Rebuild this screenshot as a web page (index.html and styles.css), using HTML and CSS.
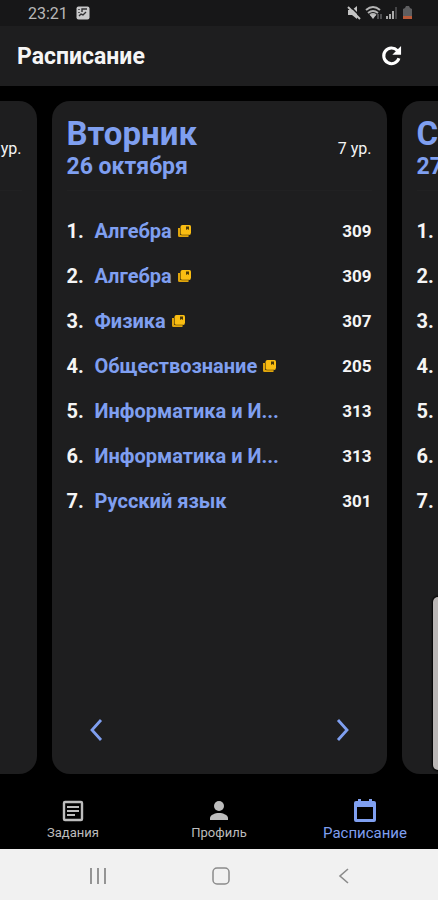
FILE: index.html
```html
<!DOCTYPE html>
<html lang="ru">
<head>
    <meta charset="UTF-8">
    <meta name="viewport" content="width=device-width, initial-scale=1.0">
    <title>Расписание</title>
    <link rel="stylesheet" href="styles.css">
</head>
<body>
    <svg class="sprite" aria-hidden="true">
        <symbol id="homework" viewBox="0 0 14 14">
            <path fill="#e0a50c" d="M0 4h2v7h8.500v2H1.500Q0 13 0 11.500z"/>
            <path fill="#f9bd12" d="M4.500 1h7Q13 1 13 2.500v6Q13 11 11 11h-7Q2.500 11 2.500 9v-6Q2.500 1 4.500 1z"/>
            <path fill="#4a3908" d="M8 2.500h3V6L9.500 5 8 6z"/>
            <path stroke="#8a6706" stroke-width="0.800" fill="none" d="M2.500 4v5.500q0 1.500 1.500 1.500h7"/>
        </symbol>
    </svg>

    <div class="status">
        <span class="time">23:21</span>
        <svg width="14" height="14" viewBox="0 0 14 14">
            <rect x="0.500" y="0.500" width="13" height="13" rx="2" fill="#c9c9ca"/>
            <path d="M3 3v1M3 6v1M6 6V3h5M3 10l2-2 2 1 3-3" stroke="#303032" stroke-width="1.400" fill="none"/>
        </svg>
        <svg class="signals" width="66" height="16" viewBox="0 0 66 16">
            <path d="M1 5h4l5-4v13L5 10H1z" fill="#c4c4c4"/>
            <path d="M3 1l11 11" stroke="#171718" stroke-width="1.500"/>
            <path d="M1 2l12 12" stroke="#c4c4c4" stroke-width="2"/>
            <path d="M19 5q7-6 14 0M21 8q5-4 10 0M23 10q3-2 6 0" fill="none" stroke="#b4b4b4" stroke-width="2"/>
            <path d="M23 10h6l-3 4z" fill="#c4c4c4"/>
            <path d="M31 14V9M34 9v5" stroke="#505052" stroke-width="2"/>
            <path d="M40 14v-3M43 14V9M46 14V6" stroke="#aaa" stroke-width="2"/>
            <path d="M49 14V2" stroke="#444446" stroke-width="2"/>
            <path d="M56 4l2-1 1-2h3l1 2 2 1v7h-9z" fill="#5e5e60"/>
            <path d="M56 11h9v3h-9z" fill="#b95a39"/>
        </svg>
    </div>

    <header class="appbar">
        <h1>Расписание</h1>
        <button class="icon-btn" aria-label="Обновить">
            <svg width="28" height="28" viewBox="0 0 24 24">
                <path d="M18.800 14A6.700 6.700 0 1 1 17.400 7.300" fill="none" stroke="#fff" stroke-width="2.600"/>
                <path d="M20.600 3.500V11h-7.500z" fill="#fff"/>
            </svg>
        </button>
    </header>

    <main class="days">
        <section class="day">
            <div class="day-head">
                <span class="count">ур.</span>
            </div>
        </section>

        <section class="day">
            <div class="day-head">
                <div>
                    <h2>Вторник</h2>
                    <p class="date">26 октября</p>
                </div>
                <span class="count">7 ур.</span>
            </div>
            <ol class="lessons">
                <li><span class="num">1.</span><span class="name">Алгебра</span><svg class="hw"><use href="#homework"/></svg><span class="room">309</span></li>
                <li><span class="num">2.</span><span class="name">Алгебра</span><svg class="hw"><use href="#homework"/></svg><span class="room">309</span></li>
                <li><span class="num">3.</span><span class="name">Физика</span><svg class="hw"><use href="#homework"/></svg><span class="room">307</span></li>
                <li><span class="num">4.</span><span class="name">Обществознание</span><svg class="hw"><use href="#homework"/></svg><span class="room">205</span></li>
                <li><span class="num">5.</span><span class="name">Информатика и И...</span><span class="room">313</span></li>
                <li><span class="num">6.</span><span class="name">Информатика и И...</span><span class="room">313</span></li>
                <li><span class="num">7.</span><span class="name">Русский язык</span><span class="room">301</span></li>
            </ol>
            <div class="day-nav">
                <button class="icon-btn" aria-label="Предыдущий день">
                    <svg width="14" height="22" viewBox="0 0 14 22"><path d="M12 1L3 11l9 10" fill="none" stroke="#7f9ff0" stroke-width="2.800"/></svg>
                </button>
                <button class="icon-btn" aria-label="Следующий день">
                    <svg width="14" height="22" viewBox="0 0 14 22"><path d="M2 1l9 10L2 21" fill="none" stroke="#7f9ff0" stroke-width="2.800"/></svg>
                </button>
            </div>
        </section>

        <section class="day">
            <div class="day-head">
                <div>
                    <h2>С</h2>
                    <p class="date">27</p>
                </div>
            </div>
            <ol class="lessons">
                <li><span class="num">1.</span></li>
                <li><span class="num">2.</span></li>
                <li><span class="num">3.</span></li>
                <li><span class="num">4.</span></li>
                <li><span class="num">5.</span></li>
                <li><span class="num">6.</span></li>
                <li><span class="num">7.</span></li>
            </ol>
        </section>
        <div class="edge-handle"></div>
    </main>

    <nav class="tabs">
        <a href="#tasks">
            <svg width="28" height="28" viewBox="0 0 28 28">
                <rect x="5" y="5" width="18" height="18" rx="1" fill="none" stroke="#bdbdbd" stroke-width="2.400"/>
                <path d="M8 10h12M8 14h12M8 18h8" stroke="#bdbdbd" stroke-width="2"/>
            </svg>
            <span>Задания</span>
        </a>
        <a href="#profile">
            <svg width="28" height="28" viewBox="0 0 28 28">
                <circle cx="14" cy="9" r="5" fill="#bdbdbd"/>
                <path d="M5 23v-2c0-3 5-5 9-5s9 2 9 5v2z" fill="#bdbdbd"/>
            </svg>
            <span>Профиль</span>
        </a>
        <a href="#schedule" class="active">
            <svg width="28" height="28" viewBox="0 0 28 28">
                <path d="M5 4h2V2h3v2h8V2h3v2h2q2 0 2 2v17q0 2-2 2H5q-2 0-2-2V6q0-2 2-2zM6 10v12h16V10z" fill="#7f9ff0" fill-rule="evenodd"/>
            </svg>
            <span>Расписание</span>
        </a>
    </nav>

    <div class="system-nav">
        <button class="icon-btn" aria-label="Недавние">
            <svg width="18" height="18" viewBox="0 0 18 18"><path d="M2 1v16M9 1v16M16 1v16" stroke="#8b8b8b" stroke-width="1.800"/></svg>
        </button>
        <button class="icon-btn" aria-label="Домой">
            <svg width="18" height="18" viewBox="0 0 18 18"><rect x="1" y="1" width="16" height="16" rx="4" fill="none" stroke="#8b8b8b" stroke-width="1.500"/></svg>
        </button>
        <button class="icon-btn" aria-label="Назад">
            <svg width="18" height="18" viewBox="0 0 18 18"><path d="M13 2L5 9l8 7" fill="none" stroke="#8b8b8b" stroke-width="1.600"/></svg>
        </button>
    </div>
</body>
</html>
```
FILE: styles.css
```css
* {
    box-sizing: border-box;
}
body {
    display: flex;
    flex-direction: column;
    height: 100vh;
    margin: 0;
    overflow: hidden;
    background: #000;
    color: #f5f5f5;
    font-family: Roboto, sans-serif;
}
h1, h2, p, ol {
    margin: 0;
    padding: 0;
}
svg {
    display: block;
    flex: none;
}
.sprite {
    position: absolute;
    width: 0;
    height: 0;
}
.icon-btn {
    display: flex;
    padding: 0;
    border: none;
    background: none;
    cursor: pointer;
}
.status {
    display: flex;
    align-items: center;
    gap: 8px;
    height: 26px;
    padding: 0 25px 0 28px;
    background: #171718;
}
.time {
    color: #b8b8b8;
    font-size: 16px;
}
.signals {
    margin-left: auto;
}
.appbar {
    display: flex;
    align-items: center;
    justify-content: space-between;
    height: 60px;
    padding: 0 33px 0 17px;
    background: #1e1e1f;
}
h1 {
    font-size: 23px;
    font-weight: 700;
}
.days {
    position: relative;
    display: flex;
    flex: 1;
    justify-content: center;
    gap: 15px;
    padding-top: 15px;
    overflow: hidden;
}
.day {
    display: flex;
    flex: none;
    flex-direction: column;
    width: calc(100% - 103px);
    padding: 0 15px;
    border-radius: 18px;
    background: #1e1e1f;
}
.day-head {
    display: flex;
    align-items: center;
    justify-content: space-between;
    height: 90px;
    padding-top: 6px;
    border-bottom: 1px solid #212122;
}
h2 {
    color: #7f9ff0;
    font-size: 33px;
    font-weight: 700;
    line-height: 36px;
}
.date {
    color: #7f9ff0;
    font-size: 23px;
    font-weight: 700;
    line-height: 30px;
}
.count {
    margin-left: auto;
    font-size: 16px;
}
.lessons {
    margin-top: 17px;
    list-style: none;
}
.lessons li {
    display: flex;
    align-items: center;
    height: 45px;
    font-size: 20px;
    font-weight: 700;
}
.num {
    width: 28px;
}
.name {
    color: #7f9ff0;
}
.hw {
    width: 14px;
    height: 14px;
    margin-left: 6px;
}
.room {
    margin-left: auto;
    font-size: 17px;
}
.day-nav {
    display: flex;
    justify-content: space-between;
    margin-top: auto;
    padding: 0 22px 33px;
}
.edge-handle {
    position: absolute;
    right: -8px;
    bottom: 4px;
    width: 13px;
    height: 173px;
    border-radius: 5px;
    background: #bab6b5;
    box-shadow: 0 0 2px 1px #000;
}
.tabs {
    display: flex;
    height: 75px;
    padding-top: 23px;
}
.tabs a {
    display: flex;
    flex: 1;
    flex-direction: column;
    align-items: center;
    color: #bdbdbd;
    font-size: 13px;
    line-height: 16px;
    text-decoration: none;
}
.tabs .active {
    color: #7f9ff0;
    font-size: 15px;
}
.system-nav {
    display: flex;
    align-items: center;
    justify-content: space-between;
    height: 51px;
    padding: 2px 85px 0 89px;
    background: #f1f1f1;
}
```
